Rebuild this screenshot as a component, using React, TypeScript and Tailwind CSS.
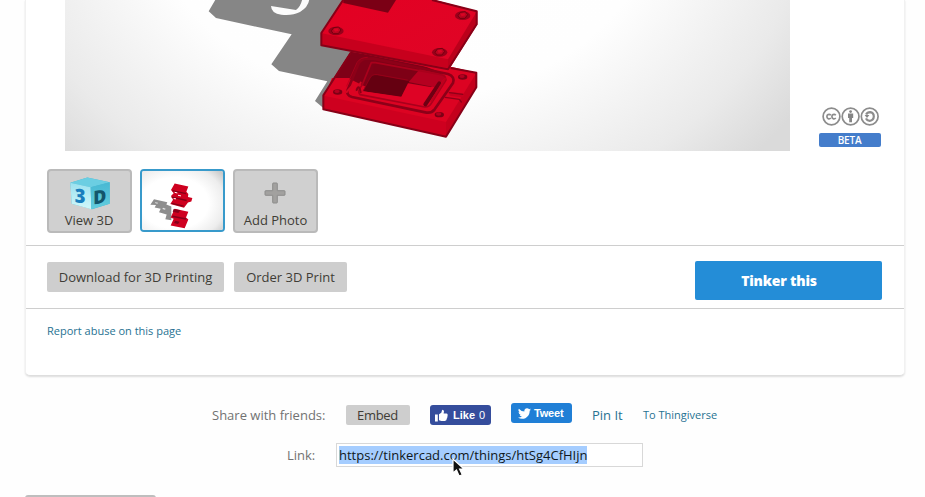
import React from "react";

function ModelScene() {
  return (
    <svg viewBox="65 0 725 151" className="block h-[151px] w-[725px]">
      <defs>
        <radialGradient id="stage" gradientUnits="userSpaceOnUse" cx="0" cy="0" r="1" gradientTransform="translate(405 -120) scale(480 400)">
          <stop offset="0" stopColor="#ffffff" />
          <stop offset="0.55" stopColor="#fefefe" />
          <stop offset="0.7" stopColor="#f4f4f4" />
          <stop offset="0.85" stopColor="#eaeaea" />
          <stop offset="1" stopColor="#dadada" />
        </radialGradient>
        <linearGradient id="top" x1="0" y1="0" x2="1" y2="1">
          <stop offset="0" stopColor="#e30022" />
          <stop offset="1" stopColor="#df0526" />
        </linearGradient>
      </defs>
      <rect x="65" y="0" width="725" height="151" fill="url(#stage)" />
      <g transform="translate(200 0) scale(0.33333)">
        <path d="M48 -4L26 34L48 54L275 103L214 193L237 213L382 244L345 303L370 324L470 170L450 -4Z" fill="#868686" />
        <path d="M213 18L288 30Q302 20 307 -3H328Q326 20 300 36Q276 48 244 44Q214 41 213 18Z" fill="#fbfbfb" />

        <path d="M452 155L370 286V328L738 410L829 262V218L760 202Z" fill="#dc0322" />
        <path d="M452 155L395 244L448 236L500 262L690 266L725 218L650 190Z" fill="#800017" />
        <path d="M396 234L450 234L434 280L374 288Z" fill="#dc0322" />
        <path d="M372 287L738 366V408L372 328Z" fill="#ce001f" />
        <path d="M738 366L829 219V262L738 410Z" fill="#c4001c" />
        <path d="M488 274L512 230Q518 223 530 224L632 240L604 292Z" fill="#650011" />
        <path d="M520 187L670 207L640 246L520 223Z" fill="#7e0016" />
        <path d="M662 205L738 228L712 263L626 246Z" fill="#b50020" />
        <path d="M624 250L709 264L672 320L480 282L490 274L604 290Z" fill="#de0325" />
        <g fill="none" strokeLinecap="round" strokeLinejoin="round">
          <path d="M498 176Q484 177 476 190L443 270Q438 286 456 291L676 337Q694 341 704 328L759 249Q766 230 744 222L520 176Z" stroke="#8d0018" strokeWidth="8" />
          <path d="M502 172Q480 172 471 188L440 258" stroke="#b5001d" strokeWidth="2" />
          <path d="M514 188L486 256Q470 276 480 284L674 321Q687 322 694 310L738 240Q737 225 720 223L526 188Z" stroke="#a9001c" strokeWidth="5" />
          <path d="M490 272L510 234Q516 222 532 224L622 240" stroke="#a5001b" strokeWidth="2" />
          <path d="M718 250L676 313" stroke="#6e0013" strokeWidth="12" />
          <path d="M735 236L694 304" stroke="#bd001d" strokeWidth="6" />
          <path d="M457 257L440 276M482 248L467 273" stroke="#d00924" strokeWidth="6" />
          <path d="M470 270Q477 250 482 277" stroke="#8a0016" strokeWidth="6" />
          <path d="M754 282L786 286" stroke="#c8001f" strokeWidth="12" />
          <path d="M736 292L778 298L784 306M748 278L788 283" stroke="#8d0018" strokeWidth="4" />
        </g>
        {[[413, 276], [788, 231], [718, 344]].map(([x, y]) => (
          <g key={x}>
            <ellipse cx={x} cy={y} rx="14" ry="8" fill="#7d0015" />
            <ellipse cx={x - 2} cy={y - 2} rx="8" ry="5" fill="#b40020" />
          </g>
        ))}
        <path d="M452 158L370 286V328L738 410L829 262V218L752 204" fill="none" stroke="#870017" strokeWidth="6" strokeLinejoin="round" />

        <path d="M442 -22L364 99V136L744 214L832 73V34L690 -4Z" fill="url(#top)" />
        <path d="M366 100L744 178V204L366 136Z" fill="#c7001d" />
        <path d="M744 178L830 35V74L744 207Z" fill="#bb001b" />
        <path d="M430 0H588L564 38L430 9Z" fill="#7b0015" />
        <path d="M432 -4L364 99V136L744 208L830 73V34L696 0" fill="none" stroke="#870017" strokeWidth="6" strokeLinejoin="round" />
        {[[408, 93], [788, 47], [719, 157]].map(([x, y]) => (
          <g key={x}>
            <ellipse cx={x} cy={y} rx="23" ry="13" fill="#98001a" />
            <path d={`M${x - 14} ${y}L${x - 7} ${y - 10}L${x + 8} ${y - 12}L${x + 15} ${y - 3}L${x + 7} ${y + 8}L${x - 8} ${y + 8}Z`} fill="#b80420" stroke="#74000f" strokeWidth="3" />
            <path d={`M${x - 7} ${y - 6}L${x + 5} ${y - 8}L${x + 8} ${y - 1}L${x - 3} ${y + 2}Z`} fill="#da0424" />
          </g>
        ))}
      </g>
    </svg>
  );
}

function ModelThumb() {
  return (
    <svg viewBox="6 6 243 180" preserveAspectRatio="none" className="block h-full w-full">
      <defs>
        <radialGradient id="thumbStage" cx=".4" cy=".52" r=".78">
          <stop offset=".5" stopColor="#fff" />
          <stop offset=".75" stopColor="#ededed" />
          <stop offset="1" stopColor="#b8b8b8" />
        </radialGradient>
      </defs>
      <rect width="260" height="200" fill="url(#thumbStage)" />
      <path d="M42 92L82 101L79 108L94 114V156L76 153L80 139L57 132L62 121L44 117L48 110L31 109Z" fill="#8e8e8e" />
      <path d="M46 101L54 103L52 106L45 104ZM69 118L77 121L75 124L67 122Z" fill="#e4e4e4" />
      <path d="M104 44L145 53L139 69L145 76L144 85L157 88L154 99L144 102L132 118L91 107L99 94L93 82L101 74L93 64Z" fill="#ce001f" />
      <path d="M97 66L138 75M95 86L140 96M95 105L131 113" stroke="#850017" strokeWidth="4" />
      <path d="M104 71L112 73M114 80L123 82M101 90L108 91" stroke="#fff" strokeWidth="3" />
      <path d="M104 121L145 130L138 148L145 154L134 181L92 172L101 152L92 148Z" fill="#cf0020" />
      <path d="M101 122L121 126L115 134L98 130ZM96 146L137 155L139 150L98 142ZM106 158L119 161L114 168L102 165Z" fill="#86001a" />
    </svg>
  );
}

function CubeIcon() {
  return (
    <svg viewBox="0 0 120 98" className="h-[33px] w-[40px]">
      <defs>
        <linearGradient id="cubeL" x1="0" y1="0" x2="0" y2="1"><stop stopColor="#9be1ef" /><stop offset="1" stopColor="#d1f8fa" /></linearGradient>
        <linearGradient id="cubeR" x1="0" y1="0" x2="0" y2="1"><stop stopColor="#47b8d3" /><stop offset="1" stopColor="#63cddd" /></linearGradient>
      </defs>
      <path d="M1 17L52 1L119 15V80L66 96L5 80Z" fill="#49b6d0" />
      <path d="M1 17L52 1L119 15L62 30Z" fill="#6bcee2" />
      <path d="M1 17L62 30L64 96L5 80Z" fill="url(#cubeL)" />
      <path d="M62 30L119 15V80L64 96Z" fill="url(#cubeR)" />
      <text transform="translate(14 75) skewY(6) scale(.95 1)" fontFamily="Open Sans" fontSize="58" fontWeight="800" fill="#197ebd">3</text>
      <text transform="translate(70 82) skewY(-9) scale(.96 1)" fontFamily="Open Sans" fontSize="56" fontWeight="800" fill="#13566b">D</text>
    </svg>
  );
}

function Licences() {
  return (
    <svg viewBox="0 0 57 19" className="h-[19px] w-[57px]" fill="none" stroke="#8c8c8c">
      <circle cx="9.5" cy="9.5" r="8.4" strokeWidth="1.7" />
      <circle cx="28.6" cy="9.5" r="8.4" strokeWidth="1.7" />
      <circle cx="47.7" cy="9.5" r="8.4" strokeWidth="1.7" />
      <path d="M8.8 8.2Q7.7 7 6.1 7.6Q4.9 8.2 4.9 9.6Q4.9 11.1 6.2 11.7Q7.7 12.2 8.8 11M13.8 8.2Q12.7 7 11.1 7.6Q9.9 8.2 9.9 9.6Q9.9 11.1 11.2 11.7Q12.7 12.2 13.8 11" strokeWidth="1.7" />
      <circle cx="28.6" cy="4.6" r="1.4" fill="#858585" stroke="none" />
      <path d="M26 6.6H31.2V10.9H30V15.2H27.2V10.9H26Z" fill="#858585" stroke="none" />
      <path d="M44.1 7.6Q45.3 5.2 48.1 5.2Q51.8 5.7 51.8 9.5Q51.6 13.5 47.7 13.8Q45 13.7 44 11.4" strokeWidth="2.2" />
      <path d="M42.6 8.1H47.4L45 10.9Z" fill="#858585" stroke="none" />
    </svg>
  );
}

const tile = "flex h-16 w-[85px] flex-col items-center rounded-[4px] border-2 border-[#bababa] bg-[#d0d0d0] text-[13px] leading-4 text-[#3f3d36]";

export default function App() {
  return (
    <div className="h-[497px] w-[925px] overflow-hidden bg-[#fefefe] font-['Open_Sans',sans-serif]">
      <main className="ml-[25px] h-[376px] w-[880px] rounded-b-[5px] border-x border-b border-x-[#f1f1f1] border-b-[#dedede] bg-white shadow-[0_1px_2px_#dcdcdc]">
        <section className="flex h-[151px] pl-[39px]">
          <ModelScene />
          <aside className="ml-[29px] flex w-[62px] flex-col items-center pt-[107px]">
            <Licences />
            <span className="mt-[7px] h-[14px] w-[62px] rounded-[2px] bg-[#447dcb] pr-px text-center text-[10px] font-semibold leading-[15px] tracking-[-0.2px] text-white">BETA</span>
          </aside>
        </section>
        <section className="flex h-[94px] gap-2 pl-[21px] pt-[18px]">
          <button className={tile}>
            <span className="mt-[4px] flex h-[37px] items-center"><CubeIcon /></span>
            <span className="whitespace-nowrap pr-px">View 3D</span>
          </button>
          <div className="h-[63px] w-[85px] overflow-hidden rounded-[4px] border-2 border-[#389acb]"><ModelThumb /></div>
          <button className={tile}>
            <span className="mt-[3px] flex h-[38px] items-center pr-px">
              <svg viewBox="0 0 22 22" className="size-[22px]"><path d="M9.3 1h3.4q.6 0 .6.6v7.1h7.1q.6 0 .6.6v3.4q0 .6-.6.6h-7.1v7.1q0 .6-.6.6H9.3q-.6 0-.6-.6v-7.1H1.6q-.6 0-.6-.6V9.3q0-.6.6-.6h7.1V1.6q0-.6.6-.6Z" fill="#a2a19f" stroke="#8c8c8b" /></svg>
            </span>
            <span className="whitespace-nowrap">Add Photo</span>
          </button>
        </section>
        <section className="flex h-16 items-center border-y border-[#cecece] pl-[21px] pr-[22px]">
          <button className="h-[30px] w-[177px] whitespace-nowrap rounded-[2px] bg-[#cecece] pt-[2px] text-[13px] text-[#3f3d36]">Download for 3D Printing</button>
          <button className="ml-[10px] h-[30px] w-[113px] whitespace-nowrap rounded-[2px] bg-[#cecece] pt-[2px] text-[13px] text-[#3f3d36]">Order 3D Print</button>
          <button className="ml-auto mt-[7px] h-[39px] w-[187px] rounded-[2px] bg-[#248dd7] pr-[19px] text-[14px] font-extrabold tracking-[-0.2px] text-white">Tinker this</button>
        </section>
        <a className="ml-[21px] mt-[14px] block text-[11px] leading-4 text-[#277292]">Report abuse on this page</a>
      </main>
      <section className="mt-[27px] flex h-[24px] items-start">
        <span className="ml-[211px] w-[135px] whitespace-nowrap pl-px text-[13px] leading-6 text-[#727272]">Share with friends:</span>
        <button className="mt-[2px] h-[20px] w-16 rounded-[2px] bg-[#cecece] pr-px text-[13px] leading-[19px] tracking-[-0.3px] text-[#3f3d36]">Embed</button>
        <button className="ml-5 mt-[2px] flex h-5 w-[61px] items-center rounded-[3px] bg-[#354d9c] pl-[5px] font-['Liberation_Sans',Arial,sans-serif] text-[11px] font-bold text-white">
          <svg viewBox="0 0 13 13" className="mr-[5px] size-[13px] shrink-0" fill="white"><path d="M0 5.5H2.8V12.5H0ZM4 5.3L6.3 3.8L7.2 .7Q9.1 .7 9 2.6L8.6 4.4H11.6Q13 4.6 12.6 6Q12.8 7 12.3 7.9Q12.4 9 11.8 9.6Q11.8 11.8 9.9 12H6.4L4 11.3Z" /></svg>
          Like<span className="ml-1 font-normal">0</span>
        </button>
        <button className="ml-5 h-5 w-[61px] rounded-[3px] bg-[#207fd6] pl-[7px] font-['Liberation_Sans',Arial,sans-serif] text-[11px] font-bold tracking-[-0.2px] text-white">
          <span className="flex items-center gap-[3px]">
            <svg viewBox="0 0 24 24" className="size-[13px] shrink-0" fill="white"><path d="M24 4.6a10 10 0 0 1-2.8.8 5 5 0 0 0 2.2-2.7 10 10 0 0 1-3.1 1.2 4.9 4.9 0 0 0-8.4 4.5A14 14 0 0 1 1.7 3.1a4.9 4.9 0 0 0 1.5 6.6 5 5 0 0 1-2.2-.6v.1a4.9 4.9 0 0 0 3.9 4.8 5 5 0 0 1-2.2.1 4.9 4.9 0 0 0 4.6 3.4A10 10 0 0 1 0 19.5a14 14 0 0 0 7.5 2.2c9.1 0 14-7.5 14-14v-.6A10 10 0 0 0 24 4.6Z" /></svg>Tweet
          </span>
        </button>
        <a className="ml-[20px] w-[50px] whitespace-nowrap text-[13px] leading-6 text-[#277292]">Pin It</a>
        <a className="whitespace-nowrap pl-px text-[11px] leading-6 text-[#277292]">To Thingiverse</a>
      </section>
      <section className="mt-4 flex h-6 items-center">
        <label className="ml-[287px] w-[49px] pt-px text-[13px] text-[#727272]">Link:</label>
        <div className="relative h-6 w-[307px] border border-[#d8d8d8] bg-white p-[2px] text-[13px] leading-[18px] text-[#101820]">
          <span className="inline-block h-[18px] whitespace-nowrap bg-[#a5cdff]">https://tinkercad.com/things/htSg4CfHIjn</span>
          <svg viewBox="0 0 14 20" className="absolute left-[115px] top-[14px] h-[20px] w-[14px]"><path d="M1 1V15L4.5 12L7.1 18L10.3 16.7L7.6 11H12Z" fill="#111" stroke="#fff" strokeWidth="1.2" /></svg>
        </div>
      </section>
      <div className="ml-[25px] mt-[28px] h-8 w-[131px] rounded-[3px] border-2 border-[#bebebe] bg-[#cecece]" />
    </div>
  );
}
